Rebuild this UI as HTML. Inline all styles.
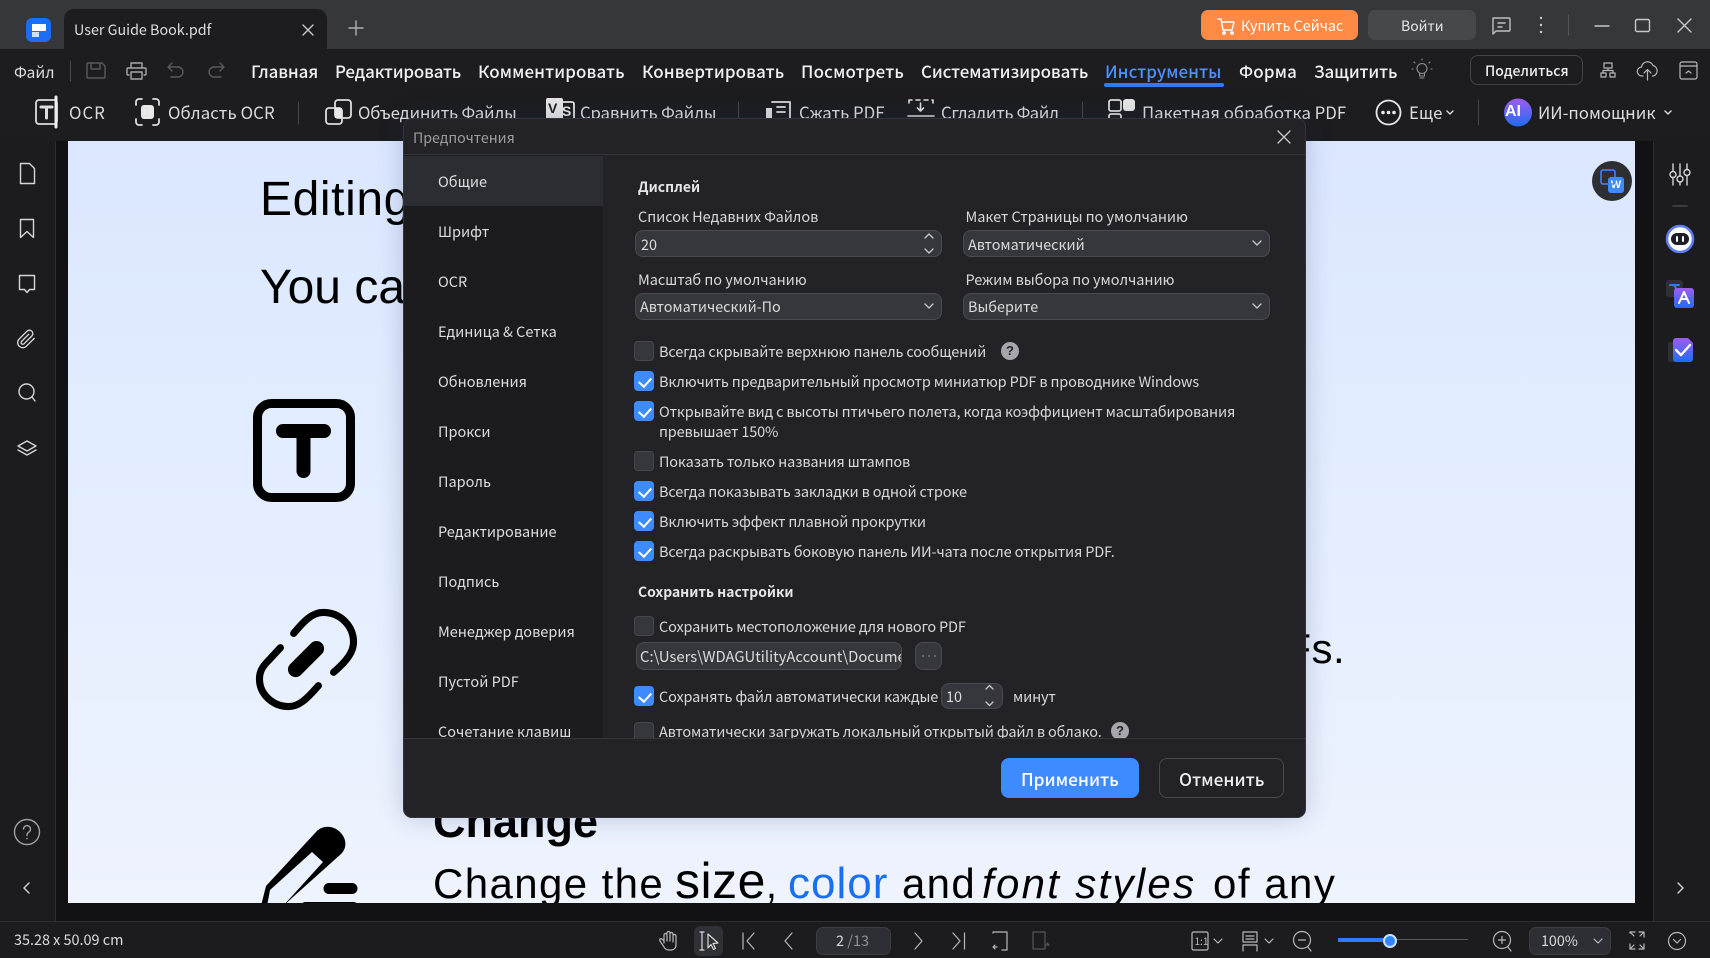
<!DOCTYPE html>
<html lang="ru"><head><meta charset="utf-8"><title>User Guide Book.pdf</title>
<style>
*{box-sizing:border-box}
html,body{margin:0;padding:0;width:1710px;height:958px;overflow:hidden;background:#1c1c1f}
body{position:relative;font-family:"Noto Sans CJK SC","Liberation Sans",sans-serif;color:#e4e4e6}
.a{position:absolute}
.t{position:absolute;white-space:nowrap;line-height:24px;height:24px;font-size:15px}
.m{font-size:16.9px;font-weight:500;color:#f0f0f0;top:58.5px}
.b{font-size:16.8px;color:#dcdcdc;top:100px}
.s{font-size:14.5px;color:#dedee0;left:438px}
.l{font-size:14.5px;letter-spacing:-.05px;color:#d8d8da}
.c{font-size:14.5px;letter-spacing:-.16px;color:#d8d8da;left:659px}
.h{font-size:13.9px;font-weight:700;color:#e6e6e8;left:638px}
.i{position:absolute;background:#36373c;border:1px solid #4a4b50;border-radius:8px}
.v{font-size:14.4px;color:#dcdcde}
.k{position:absolute;left:634px;width:20px;height:20px;border-radius:4px;background:#36373c;border:1px solid #47484d}
.k.on{background:#3d8bff;border-color:#3d8bff}
.k.on:after{content:"";position:absolute;left:6px;top:2.5px;width:6px;height:10px;border:solid #fff;border-width:0 2.2px 2.2px 0;transform:rotate(42deg)}
.p{font-family:"Liberation Sans",sans-serif;color:#000;line-height:60px;height:60px;font-size:42px}
svg{position:absolute;left:0;top:0;overflow:visible}
</style></head><body>

<!-- document page -->
<div class="a" style="left:56px;top:141px;width:1597px;height:780px;background:#121214"></div>
<div class="a" style="left:68px;top:141px;width:1567px;height:762px;background:linear-gradient(180deg,#dbe7ff 0%,#e4eeff 50%,#eef3fe 100%)"></div>
<div class="t p" style="left:260px;top:170px;font-size:48px;letter-spacing:.6px">Editing</div>
<div class="t p" style="left:260px;top:258px;font-size:48px">You ca</div>
<div class="t p" style="left:1226px;top:619px;font-size:42px;letter-spacing:.5px">PDFs.</div>
<div class="t p" style="left:433px;top:792px;font-size:45px;font-weight:700">Change</div>
<div class="t p" style="left:433px;top:854px;letter-spacing:1.4px">Change the</div>
<div class="t p" style="left:675px;top:851px;font-size:50px;letter-spacing:.5px">size<span style="font-size:40px">,</span></div>
<div class="t p" style="left:788px;top:854px;color:#1a6ef2;font-size:44px;letter-spacing:1px">color</div>
<div class="t p" style="left:902px;top:854px;letter-spacing:1.3px">and</div>
<div class="t p" style="left:982px;top:854px;font-style:italic;letter-spacing:2.3px">font styles</div>
<div class="t p" style="left:1213px;top:854px;letter-spacing:1.5px">of any</div>

<svg width="1710" height="958" fill="none">
<!-- T icon -->
<rect x="257.5" y="403.5" width="93" height="94" rx="14" stroke="#000" stroke-width="9"/>
<path d="M283 431h41M303.500 431v40" stroke="#000" stroke-width="14" stroke-linecap="round"/>
<!-- link icon -->
<g transform="translate(306.5 660) scale(.95) translate(-306.5 -660)">
<path d="M293 632C303 620 312 610 324 610C342 610 356 624 356 641C356 651 350 660 335 673" stroke="#000" stroke-width="7.500" stroke-linecap="round"/>
<path d="M279 647L267 660C260 667 257 672 257 680C257 696 271 709 288 709C298 709 306 702 319 687" stroke="#000" stroke-width="7.500" stroke-linecap="round"/>
<path d="M317 648L295 670" stroke="#000" stroke-width="16" stroke-linecap="round"/>
</g>
<!-- pen icon -->
<path d="M261 906L266 886L316 832C322 825 333 825 340 832C347 839 347 848 341 854L283 906z" fill="#000"/>
<path d="M312 852L323 862L283 906H267L270 890z" fill="#eaf1fe"/>
<path d="M329 888.500H352" stroke="#000" stroke-width="11" stroke-linecap="round"/>
<path d="M305 905h49" stroke="#000" stroke-width="6" stroke-linecap="round"/>
</svg>
<div class="a" style="left:56px;top:903px;width:1597px;height:18px;background:#121214"></div>

<!-- top tab bar -->
<div class="a" style="left:0;top:0;width:1710px;height:49px;background:#36373b"></div>
<div class="a" style="left:64px;top:9px;width:263px;height:40px;background:#1d1d20;border-radius:10px 10px 0 0"></div>
<div class="a" style="left:26px;top:18px;width:25px;height:24px;background:#1b6ef3;border-radius:6px"></div>
<div class="a" style="left:32px;top:24px;width:14px;height:7px;background:#fff;border-radius:0 1px 1px 0"></div>
<div class="a" style="left:32px;top:32px;width:7px;height:5px;background:#cfe0ff"></div>
<div class="t" style="left:74px;top:18px;color:#dedee0;font-size:14.3px">User Guide Book.pdf</div>

<div class="a" style="left:1201px;top:10px;width:157px;height:30px;background:#ff8a45;border-radius:7px"></div>
<div class="t" style="left:1241px;top:14px;font-size:14.3px;color:#fff">Купить Сейчас</div>
<div class="a" style="left:1368px;top:10px;width:108px;height:30px;background:#47484c;border-radius:7px"></div>
<div class="t" style="left:1401px;top:14px;font-size:14px;color:#e8e8e8">Войти</div>

<!-- menu + toolbar -->
<div class="a" style="left:0;top:49px;width:1710px;height:92px;background:#1d1d20"></div>
<div class="t" style="left:14px;top:60px;font-size:15.7px;color:#dedede">Файл</div>
<div class="t m" style="left:251px;letter-spacing:-.1px">Главная</div>
<div class="t m" style="left:335px;letter-spacing:-.15px">Редактировать</div>
<div class="t m" style="left:478px;letter-spacing:.15px">Комментировать</div>
<div class="t m" style="left:642px;letter-spacing:.15px">Конвертировать</div>
<div class="t m" style="left:801px;letter-spacing:.2px">Посмотреть</div>
<div class="t m" style="left:921px;letter-spacing:-.05px">Систематизировать</div>
<div class="t m" style="left:1105px;color:#4d90ff;letter-spacing:.1px">Инструменты</div>
<div class="a" style="left:1104px;top:83px;width:120px;height:4px;background:#2f7bff;border-radius:2px"></div>
<div class="t m" style="left:1239px;letter-spacing:.2px">Форма</div>
<div class="t m" style="left:1314px;letter-spacing:-.1px">Защитить</div>
<div class="a" style="left:1470px;top:55px;width:113px;height:30px;border:1px solid #434348;border-radius:8px"></div>
<div class="t" style="left:1485px;top:59px;font-size:14px;font-weight:500;color:#eee">Поделиться</div>

<div class="t b" style="left:69px;letter-spacing:1px">OCR</div>
<div class="t b" style="left:168px;letter-spacing:.1px">Область OCR</div>
<div class="t b" style="left:358px;letter-spacing:-.2px">Объединить Файлы</div>
<div class="t b" style="left:580px;letter-spacing:-.15px">Сравнить Файлы</div>
<div class="t b" style="left:799px">Сжать PDF</div>
<div class="t b" style="left:941px;letter-spacing:-.35px">Сгладить Файл</div>
<div class="t b" style="left:1142px">Пакетная обработка PDF</div>
<div class="t b" style="left:1409px">Еще</div>
<div class="t b" style="left:1538px">ИИ-помощник</div>

<!-- side bars -->
<div class="a" style="left:0;top:141px;width:56px;height:780px;background:#1c1c1f;border-right:1px solid #2c2c30"></div>
<div class="a" style="left:1653px;top:141px;width:57px;height:780px;background:#1c1c1f;border-left:1px solid #2c2c30"></div>
<div class="a" style="left:0;top:921px;width:1710px;height:37px;background:#1c1c1f;border-top:1px solid #2e2e32"></div>
<div class="t" style="left:14px;top:928px;font-size:14.4px;color:#dcdcde">35.28 x 50.09 cm</div>

<!-- status bar controls -->
<div class="a" style="left:694px;top:926px;width:29px;height:30px;background:#303136;border-radius:6px"></div>
<div class="a" style="left:816px;top:927px;width:75px;height:28px;background:#2e2f34;border:1px solid #3c3d42;border-radius:7px"></div>
<div class="t" style="left:836px;top:929px;font-size:14.5px;color:#d8d8da">2 <span style="color:#8f9095">/13</span></div>
<div class="a" style="left:1529px;top:927px;width:82px;height:28px;background:#2e2f34;border:1px solid #3c3d42;border-radius:7px"></div>
<div class="t" style="left:1541px;top:929px;font-size:14.3px;color:#d8d8da">100%</div>
<div class="a" style="left:1338px;top:939px;width:130px;height:1px;background:#5b5c60"></div>
<div class="a" style="left:1338px;top:938px;width:52px;height:4px;background:#2f7bff"></div>
<div class="a" style="left:1383px;top:934px;width:14px;height:14px;border-radius:50%;background:#2f86ff;border:2px solid #cfe0ff"></div>

<!-- word badge -->
<div class="a" style="left:1592px;top:161px;width:40px;height:40px;border-radius:50%;background:#2e2f33"></div>
<div class="a" style="left:1608px;top:177px;width:16px;height:16px;border-radius:3px;background:#3d8bff;color:#fff;font:700 11px/16px 'Liberation Sans',sans-serif;text-align:center">W</div>

<svg width="1710" height="958" fill="none" stroke="#cfcfd2" stroke-width="1.400" stroke-linecap="round" stroke-linejoin="round">
<!-- tab icons -->
<path d="M303 25l10 10M313 25l-10 10" stroke="#c8c8ca"/>
<path d="M349 28h14M356 21v14" stroke="#b0b0b4"/>
<!-- cart -->
<path d="M1218 19h3l2 11h9l2-8h-12" stroke="#fff"/><circle cx="1224" cy="33" r="1.200" fill="#fff" stroke="#fff"/><circle cx="1232" cy="33" r="1.200" fill="#fff" stroke="#fff"/>
<!-- chat -->
<path d="M1493 18h16a1 1 0 0 1 1 1v11a1 1 0 0 1-1 1h-13l-3 3z" stroke="#c0c0c4"/><path d="M1498 23h7M1498 27h4" stroke="#c0c0c4"/>
<circle cx="1541" cy="18" r="1.200" fill="#ccc" stroke="none"/><circle cx="1541" cy="25" r="1.200" fill="#ccc" stroke="none"/><circle cx="1541" cy="32" r="1.200" fill="#ccc" stroke="none"/>
<path d="M1568.500 15v20" stroke="#55565a" stroke-width="1"/>
<path d="M1595 26h14M1678 19l13 13M1691 19l-13 13" stroke="#c8c8cc"/>
<rect x="1635.500" y="19.500" width="14" height="12" rx="1.500" stroke="#c8c8cc"/>
<!-- menu icons -->
<path d="M70.500 61v20" stroke="#4a4a4e" stroke-width="1"/>
<g stroke="#5a5a5e">
<path d="M88 63h14l3 3v11a1 1 0 0 1-1 1H88a1 1 0 0 1-1-1V64a1 1 0 0 1 1-1zM91 63v6h9v-6"/>
<path d="M172 63l-4 4 4 4M168 67h10a5 5 0 0 1 0 10h-7"/>
<path d="M220 63l4 4-4 4M224 67h-10a5 5 0 0 0 0 10h7"/>
</g>
<path d="M131 68v-5h11v5M129 75h-1a1 1 0 0 1-1-1v-5a1 1 0 0 1 1-1h17a1 1 0 0 1 1 1v5a1 1 0 0 1-1 1h-1M131 72h11v7h-11z" stroke="#a8a8ac"/>
<circle cx="1422" cy="68.500" r="5" stroke="#8e8e92" stroke-width="1.100"/><path d="M1419.500 73.500v2.500h5v-2.500M1420 78h4M1422 60v-1M1415 63l-1-1M1429 63l1-1M1413 69h-1M1431 69h1" stroke="#8e8e92" stroke-width="1.100"/>
<!-- share/org icons -->
<path d="M1604 63h8v5h-8zM1601 73h5v4h-5zM1610 73h5v4h-5zM1608 68v2.500M1603 73v-2.500h10v2.500" stroke="#b8b8bc" stroke-width="1.200"/>
<path d="M1643 76h-1a4.500 4.500 0 0 1-.5-9 6 6 0 0 1 11.500-1.500 5.500 5.500 0 0 1 .5 10.500h-1M1647.500 80v-10M1644 73l3.500-3.500 3.500 3.500" stroke="#b8b8bc" stroke-width="1.200"/>
<rect x="1680" y="62" width="17" height="17" rx="2" stroke="#b8b8bc" stroke-width="1.200"/><path d="M1680 66h17M1686 73l2.500-2 2.500 2" stroke="#b8b8bc" stroke-width="1.200"/>
<!-- toolbar icons -->
<rect x="36" y="100" width="21" height="24" rx="3" stroke="#ddd" stroke-width="1.800"/>
<path d="M41 107h11M46.500 107v11" stroke="#ddd" stroke-width="3"/>
<path d="M56 97v30" stroke="#eee" stroke-width="3"/>
<path d="M136 105v-3a3 3 0 0 1 3-3h3M153 99h3a3 3 0 0 1 3 3v3M159 119v3a3 3 0 0 1-3 3h-3M142 125h-3a3 3 0 0 1-3-3v-3" stroke="#ddd" stroke-width="1.800"/>
<rect x="141" y="105" width="13" height="14" rx="3" fill="#e8e8e8" stroke="none"/>
<path d="M298.500 102v22M738.500 102v16M1082.500 102v16M1478.500 100v25" stroke="#47474b" stroke-width="1"/>
<rect x="335" y="100" width="16" height="18" rx="3" stroke="#ddd" stroke-width="1.800"/>
<rect x="326" y="108" width="16" height="16" rx="3" stroke="#ddd" stroke-width="1.800"/>
<rect x="335" y="108" width="7" height="10" fill="#e8e8e8" stroke="none"/>
<rect x="546" y="98" width="17" height="22" rx="2" fill="#e6e6e6" stroke="none"/>
<path d="M563 102h9a2 2 0 0 1 2 2v16" stroke="#e6e6e6" stroke-width="1.800"/>
<text x="548" y="113" font-family="Liberation Sans,sans-serif" font-size="14" font-weight="700" fill="#222" stroke="none">V</text>
<text x="562" y="116" font-family="Liberation Sans,sans-serif" font-size="14" font-weight="700" fill="#e6e6e6" stroke="none">S</text>
<path d="M772 102h18v18M777 107h8M777 112h8" stroke="#ddd" stroke-width="1.800"/>
<path d="M766 108h6v12h-6z" fill="#ddd" stroke="none"/>
<path d="M909 103v-3h3M916 100h4M924 100h4M932 100h1v3M920.500 103v8M917.500 108l3 3 3-3M908 116h26" stroke="#ddd" stroke-width="1.600"/>
<rect x="1109" y="100" width="12" height="11" rx="2" stroke="#ddd" stroke-width="1.800"/>
<rect x="1123" y="99" width="12" height="12" rx="3" fill="#e6e6e6" stroke="none"/>
<rect x="1109" y="114" width="12" height="8" rx="2" stroke="#ddd" stroke-width="1.800"/>
<circle cx="1388.500" cy="112.500" r="12" stroke="#e8e8e8" stroke-width="1.800"/>
<circle cx="1383" cy="112.500" r="1.800" fill="#e8e8e8" stroke="none"/><circle cx="1388.500" cy="112.500" r="1.800" fill="#e8e8e8" stroke="none"/><circle cx="1394" cy="112.500" r="1.800" fill="#e8e8e8" stroke="none"/>
<path d="M1447 111l3 3 3-3M1665 111l3 3 3-3" stroke="#ddd"/>
<defs><linearGradient id="g" x1="0" y1="0" x2="0" y2="1"><stop offset="0" stop-color="#a05cf0"/><stop offset="1" stop-color="#1f6cf5"/></linearGradient></defs>
<circle cx="1518" cy="112.500" r="14" fill="url(#g)" stroke="none"/>
<!-- left rail -->
<g stroke="#d6d6d8">
<path d="M20.500 163.500h9l5 5v15h-14z"/>
<path d="M20.500 219.500h13v18l-6.500-6-6.500 6z"/>
<path d="M19.500 275.500h15v14h-5l-2.500 3-2.500-3h-5z"/>
<path transform="translate(16 329) scale(.85)" stroke-width="1.600" d="M21.440 11.050l-9.190 9.190a6 6 0 0 1-8.490-8.490l9.190-9.190a4 4 0 0 1 5.660 5.660l-9.200 9.190a2 2 0 0 1-2.830-2.830l8.490-8.480"/>
<circle cx="26.500" cy="391.500" r="7.500"/><path d="M32 397l3 4"/>
<path d="M27 441l9 5-9 5-9-5zM18 450l9 5 9-5"/>
<circle cx="27" cy="832" r="12.500" stroke="#a0a0a4"/>
<path d="M23.500 829a3.500 3.500 0 1 1 5.500 3c-1.500 1-2 1.500-2 3.500M27 838.500v.300" stroke="#a0a0a4"/>
<path d="M29 883l-5 5 5 5"/>
<path d="M1678 883l5 5-5 5"/>
</g>
<!-- right rail -->
<g stroke="#d6d6d8">
<path d="M1673 164v7M1673 178v7M1680 164v12M1680 182v3M1687 164v5M1687 176v9"/>
<circle cx="1673" cy="174.500" r="3"/><circle cx="1680" cy="179" r="3"/><circle cx="1687" cy="172.500" r="3"/>
<path d="M1673 206h14" stroke="#45454a"/>
</g>
<circle cx="1680" cy="239" r="13" fill="#fff" stroke="#5d7cf5" stroke-width="2.500"/>
<rect x="1671" y="233" width="18" height="12" rx="6" fill="#1d1d28" stroke="none"/>
<path d="M1677 237v4M1683 237v4" stroke="#fff" stroke-width="2"/>
<rect x="1666" y="280" width="17" height="17" rx="3" fill="#2f3036" stroke="none"/>
<path d="M1670 285h9M1674 285l3 5" stroke="#2f7bff" stroke-width="2"/>
<rect x="1674" y="288" width="20" height="20" rx="3" fill="url(#g)" stroke="none"/>
<path d="M1679 303l5-11 5 11M1681 299h6" stroke="#fff" stroke-width="2"/>
<rect x="1668" y="342" width="8" height="20" rx="2" fill="#2f3036" stroke="none"/>
<path d="M1673 341a3 3 0 0 1 3-3h12l5 5v16a3 3 0 0 1-3 3h-14a3 3 0 0 1-3-3z" fill="url(#g)" stroke="none"/>
<path d="M1676 350l5 5 9-10" stroke="#fff" stroke-width="2.400"/>
<!-- word badge -->
<rect x="1601" y="170" width="14" height="14" rx="2" stroke="#3d8bff" stroke-width="1.500"/>
<!-- status icons -->
<g stroke="#b8b8bc" stroke-width="1.200">
<path d="M664 943v-8a1.500 1.500 0 0 1 3 0v6m0-8a1.500 1.500 0 0 1 3 0v8m0-7a1.500 1.500 0 0 1 3 0v8m-9-1l-2-2c-1.500-1 -3 .5-2 2l4 6c1 2 3 3 5 3h2c3 0 5-2 5-5v-9a1.500 1.500 0 0 0-3 0v4"/>
<path d="M702 932v18M700 932h4M700 950h4M708 934l10 9-5 .500 2.500 5-2 1-2.500-5-3 3.500z" stroke="#d8d8da"/>
<path d="M743 933v16M754 933l-7 8 7 8M792 933l-7 8 7 8M915 933l7 8-7 8M953 933l7 8-7 8M964.500 933v16"/>
<path d="M993 933v-1h14v18h-5M997 947h-4M995 945l-2 2 2 2"/>
<path d="M1033 932h12v17h-12z" stroke="#56565a"/><path d="M1045 945h4l-2-2" stroke="#56565a"/>
<rect x="1192" y="932" width="16" height="18" rx="1.500"/><path d="M1214 939l4 4 4-4M1265 939l4 4 4-4M1594 939l4 4 4-4"/>
<path d="M1243 932h14v10h-14zM1246 936h8M1246 939h8M1243 945h14v6M1243 945v6"/>
<circle cx="1302" cy="940" r="8.500"/><path d="M1298.500 940h7M1308 947l3 4"/>
<circle cx="1502" cy="940" r="8.500"/><path d="M1498.500 940h7M1502 936.500v7M1508 947l3 4"/>
<path d="M1630 933v-1h5M1639 932h5v5M1644 944v5h-5M1635 949h-5v-5M1631 933l3 3M1643 933l-3 3M1643 948l-3-3M1631 948l3-3"/>
<circle cx="1677" cy="941" r="8.500"/><path d="M1673.500 939.500l3.500 3.500 3.500-3.500"/>
</g>
</svg>
<div class="t" style="left:1194.500px;top:929px;font-size:10px;color:#b8b8bc">1:1</div>
<div class="t" style="left:1505px;top:100px;font:700 16px/24px 'Liberation Sans',sans-serif;color:#fff">AI</div>

<!-- dialog -->
<div class="a" style="left:403px;top:118px;width:903px;height:700px;background:#232327;border-radius:9px;border:1px solid #34343a;box-shadow:0 0 26px rgba(30,50,100,.22)"></div>
<div class="t" style="left:413px;top:126px;font-size:14.2px;color:#9d9da2">Предпочтения</div>
<div class="a" style="left:404px;top:154px;width:901px;height:1px;background:#36363b"></div>
<div class="a" style="left:404px;top:155px;width:199px;height:583px;background:#1c1c1f"></div>
<div class="a" style="left:404px;top:156px;width:199px;height:50px;background:#2c2c33"></div>
<div class="t s" style="top:170px">Общие</div>
<div class="t s" style="top:220px">Шрифт</div>
<div class="t s" style="top:270px">OCR</div>
<div class="t s" style="top:320px">Единица &amp; Сетка</div>
<div class="t s" style="top:370px">Обновления</div>
<div class="t s" style="top:420px">Прокси</div>
<div class="t s" style="top:470px">Пароль</div>
<div class="t s" style="top:520px">Редактирование</div>
<div class="t s" style="top:570px">Подпись</div>
<div class="t s" style="top:620px">Менеджер доверия</div>
<div class="t s" style="top:670px">Пустой PDF</div>
<div class="t s" style="top:720px">Сочетание клавиш</div>

<div class="t h" style="top:175px">Дисплей</div>
<div class="t l" style="left:638px;top:205px">Список Недавних Файлов</div>
<div class="t l" style="left:965.500px;top:205px">Макет Страницы по умолчанию</div>
<div class="i" style="left:635px;top:230px;width:307px;height:27px"></div>
<div class="t v" style="left:641px;top:232.500px">20</div>
<div class="i" style="left:963px;top:230px;width:307px;height:27px"></div>
<div class="t v" style="left:968px;top:232.500px">Автоматический</div>
<div class="t l" style="left:638px;top:268px">Масштаб по умолчанию</div>
<div class="t l" style="left:965.500px;top:268px">Режим выбора по умолчанию</div>
<div class="i" style="left:635px;top:293px;width:307px;height:27px"></div>
<div class="t v" style="left:640px;top:294.500px">Автоматический-По</div>
<div class="i" style="left:963px;top:293px;width:307px;height:27px"></div>
<div class="t v" style="left:968px;top:294.500px">Выберите</div>

<div class="k" style="top:341px"></div><div class="t c" style="top:340px">Всегда скрывайте верхнюю панель сообщений</div>
<div class="a" style="left:1001px;top:342px;width:18px;height:18px;border-radius:50%;background:#a6a7ac;color:#232327;font:700 13px/18px 'Liberation Sans',sans-serif;text-align:center">?</div>
<div class="k on" style="top:371px"></div><div class="t c" style="top:370px">Включить предварительный просмотр миниатюр PDF в проводнике Windows</div>
<div class="k on" style="top:401px"></div><div class="t c" style="top:400px">Открывайте вид с высоты птичьего полета, когда коэффициент масштабирования</div>
<div class="t c" style="top:420px">превышает 150%</div>
<div class="k" style="top:451px"></div><div class="t c" style="top:450px">Показать только названия штампов</div>
<div class="k on" style="top:481px"></div><div class="t c" style="top:480px">Всегда показывать закладки в одной строке</div>
<div class="k on" style="top:511px"></div><div class="t c" style="top:510px">Включить эффект плавной прокрутки</div>
<div class="k on" style="top:541px"></div><div class="t c" style="top:540px">Всегда раскрывать боковую панель ИИ-чата после открытия PDF.</div>

<div class="t h" style="top:580px">Сохранить настройки</div>
<div class="k" style="top:616px"></div><div class="t c" style="top:615px">Сохранить местоположение для нового PDF</div>
<div class="i" style="left:636px;top:642px;width:266px;height:28px;overflow:hidden"><div class="t v" style="left:3px;top:1.500px;font-size:14.8px">C:\Users\WDAGUtilityAccount\Docume</div></div>
<div class="i" style="left:915px;top:642px;width:27px;height:28px"></div>
<div class="k on" style="top:686px"></div><div class="t c" style="top:685px">Сохранять файл автоматически каждые</div>
<div class="i" style="left:941px;top:683px;width:62px;height:26px"></div>
<div class="t v" style="left:946px;top:684.500px">10</div>
<div class="t c" style="left:1013px;top:685px">минут</div>
<div class="k" style="top:722px"></div><div class="t c" style="top:720px">Автоматически загружать локальный открытый файл в облако.</div>
<div class="a" style="left:1111px;top:722px;width:18px;height:18px;border-radius:50%;background:#a6a7ac;color:#232327;font:700 13px/18px 'Liberation Sans',sans-serif;text-align:center">?</div>

<div class="a" style="left:404px;top:738px;width:901px;height:79px;background:#232327;border-top:1px solid #36363b;border-radius:0 0 8px 8px"></div>
<div class="a" style="left:1001px;top:758px;width:138px;height:40px;background:#3d8bff;border-radius:8px"></div>
<div class="t" style="left:1021px;top:766.500px;font-size:17.3px;font-weight:500;color:#fff">Применить</div>
<div class="a" style="left:1159px;top:758px;width:125px;height:40px;border:1px solid #48484d;border-radius:8px"></div>
<div class="t" style="left:1179px;top:766.500px;font-size:17.3px;font-weight:500;color:#eee">Отменить</div>

<svg width="1710" height="958" fill="none" stroke="#c8c8cc" stroke-width="1.300" stroke-linecap="round" stroke-linejoin="round">
<path d="M1278 131l12 12M1290 131l-12 12"/>
<path d="M925 238l4-4 4 4M925 249l4 4 4-4"/>
<path d="M1253 241l4 4 4-4M925 304l4 4 4-4M1253 304l4 4 4-4"/>
<path d="M986 689l3.500-3.500 3.500 3.500M986 702l3.500 3.500 3.500-3.500"/>
<circle cx="923" cy="656" r=".9" fill="#8a8a8e" stroke="none"/><circle cx="929" cy="656" r=".9" fill="#8a8a8e" stroke="none"/><circle cx="935" cy="656" r=".9" fill="#8a8a8e" stroke="none"/>
</svg>
</body></html>
